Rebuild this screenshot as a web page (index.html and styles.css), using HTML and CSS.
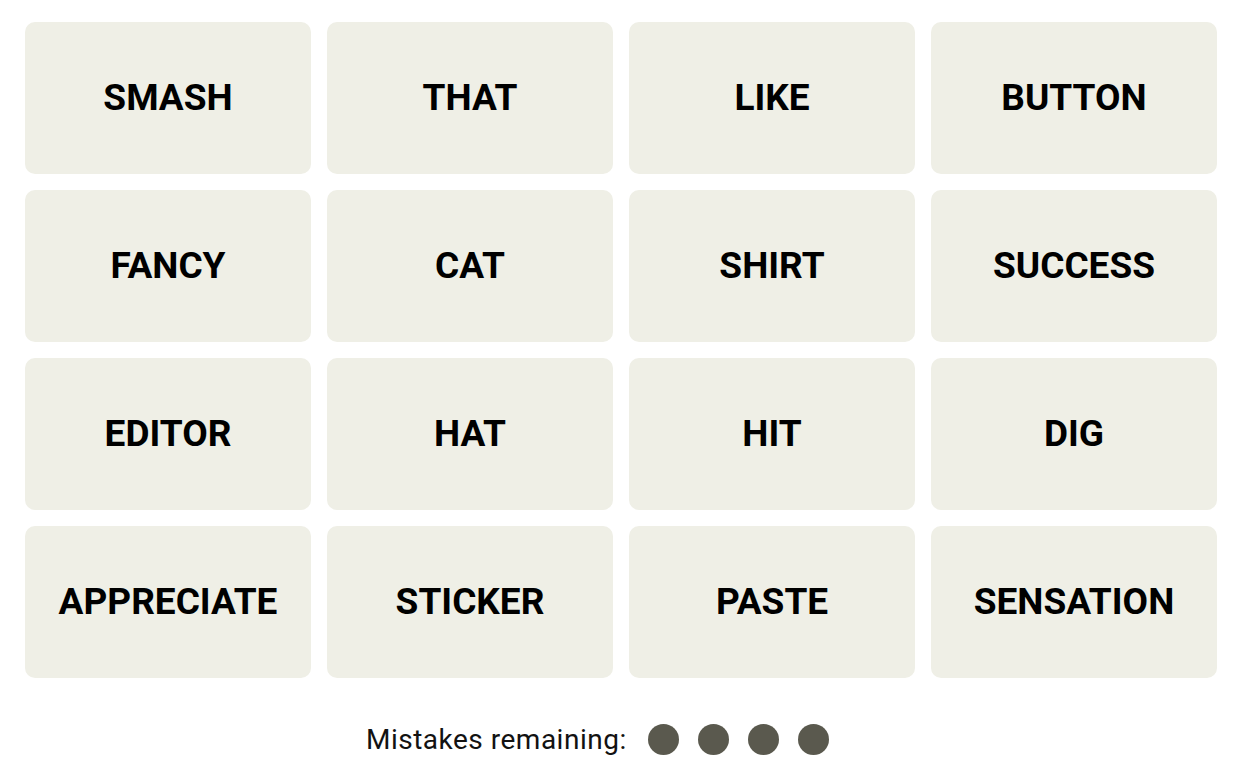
FILE: index.html
```html
<!DOCTYPE html>
<html>
<head>
<meta charset="utf-8">
<link rel="stylesheet" href="styles.css">
</head>
<body>
<div class="game">
  <div class="board">
    <div class="tile">SMASH</div>
    <div class="tile">THAT</div>
    <div class="tile">LIKE</div>
    <div class="tile">BUTTON</div>
    <div class="tile">FANCY</div>
    <div class="tile">CAT</div>
    <div class="tile">SHIRT</div>
    <div class="tile">SUCCESS</div>
    <div class="tile">EDITOR</div>
    <div class="tile">HAT</div>
    <div class="tile">HIT</div>
    <div class="tile">DIG</div>
    <div class="tile">APPRECIATE</div>
    <div class="tile">STICKER</div>
    <div class="tile">PASTE</div>
    <div class="tile">SENSATION</div>
  </div>
  <div class="mistakes">
    <span class="label">Mistakes remaining:</span>
    <span class="dots">
      <span class="dot"></span>
      <span class="dot"></span>
      <span class="dot"></span>
      <span class="dot"></span>
    </span>
  </div>
</div>
</body>
</html>
```
FILE: styles.css
```css
html, body {
  margin: 0;
  padding: 0;
  background: #ffffff;
}
.game {
  padding: 22px 32px 0 25px;
  font-family: Roboto, "Liberation Sans", sans-serif;
}
.board {
  display: grid;
  grid-template-columns: repeat(4, 286px);
  grid-auto-rows: 152px;
  column-gap: 16px;
  row-gap: 16px;
}
.tile {
  background: #efefe6;
  border-radius: 10px;
  display: flex;
  align-items: center;
  justify-content: center;
  font-weight: 700;
  font-size: 37px;
  color: #000;
  padding-bottom: 2px;
}
.mistakes {
  margin-top: 41px;
  height: 40px;
  display: flex;
  align-items: center;
  padding-left: 341px;
}
.label {
  font-size: 28px;
  letter-spacing: 0.5px;
  color: #121212;
  margin-right: 21px;
}
.dots {
  display: flex;
  gap: 19px;
}
.dot {
  width: 31px;
  height: 31px;
  border-radius: 50%;
  background: #5a594e;
}
```
